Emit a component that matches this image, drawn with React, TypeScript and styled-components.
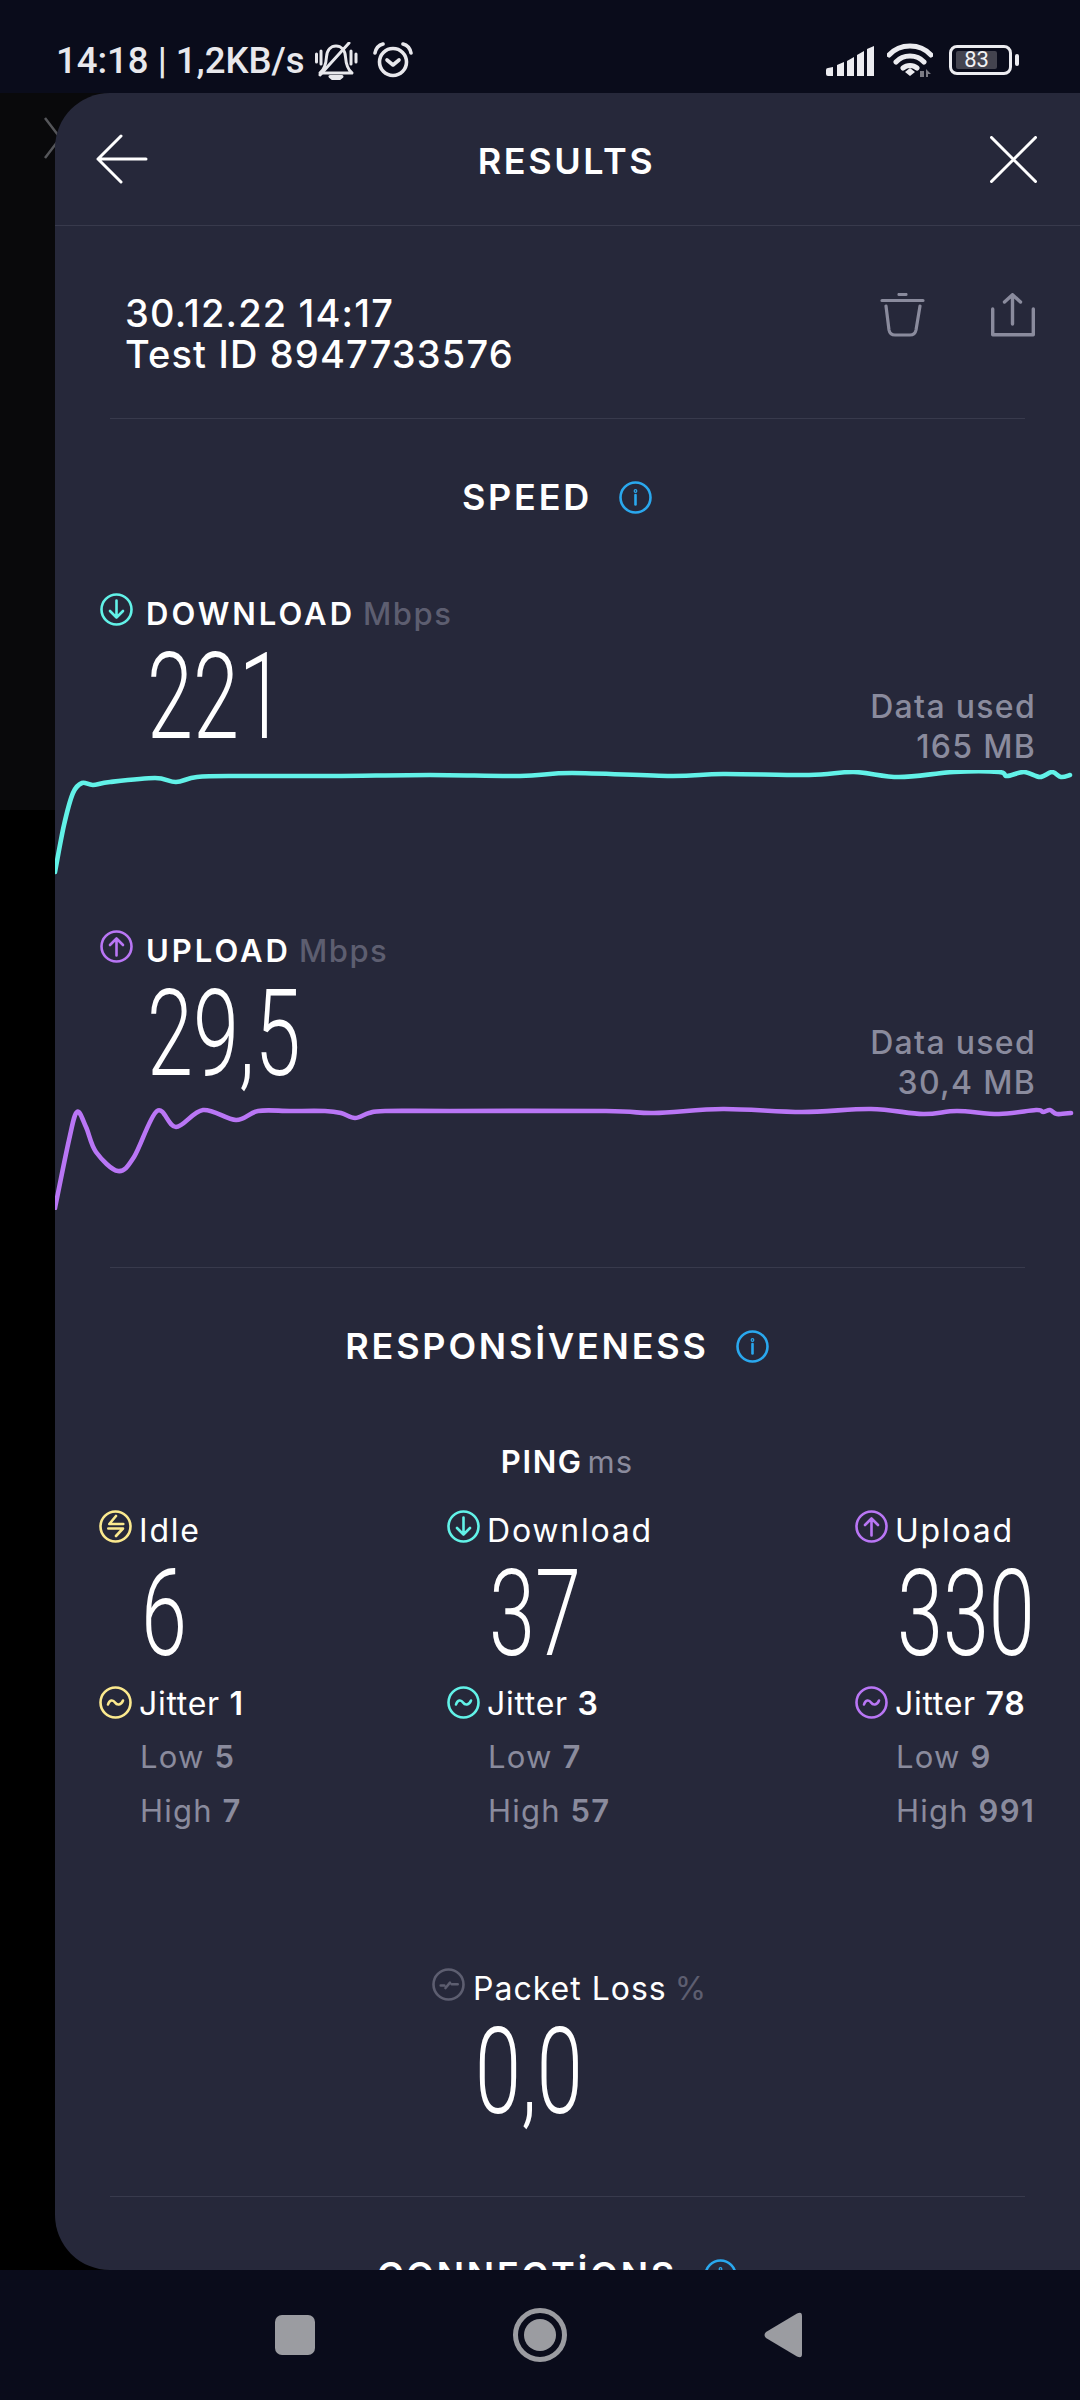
import React from "react";
import styled, { createGlobalStyle } from "styled-components";

const Global = createGlobalStyle`
  html, body { margin: 0; padding: 0; background: #0a0c1b; }
  * { box-sizing: border-box; }
`;

const TEXT = `Inter, "Liberation Sans", sans-serif`;
const GRAY = "#8a8b9d";
const DIM = "#5d5e70";
const CYAN = "#62f2e8";
const PURPLE = "#b976f5";
const YELLOW = "#fbe98e";
const BLUE = "#2aa8ee";

const Screen = styled.div`
  width: 1080px;
  height: 2400px;
  display: flex;
  flex-direction: column;
  overflow: hidden;
  background: #0a0c1b;
  font-family: ${TEXT};
  color: #fff;
`;

/* ---------- status bar ---------- */
const StatusBar = styled.div`
  flex: 0 0 93px;
  display: flex;
  align-items: flex-start;
  justify-content: space-between;
  padding: 42px 68px 0 56px;
  color: #e8e8ec;
`;
const StatusGroup = styled.div`
  display: flex;
  align-items: flex-start;
`;
const Clock = styled.span`
  font: 500 36.5px/38px Roboto, sans-serif;
  margin-right: 9px;
  white-space: nowrap;
`;
const AlarmIcon = styled.svg`
  margin-left: 15px;
`;
const SignalIcon = styled.svg`
  margin-top: 4px;
`;
const WifiIcon = styled.svg`
  margin-left: 13px;
`;
const Battery = styled.div`
  position: relative;
  width: 63px;
  height: 30px;
  margin: 3px 0 0 16px;
  border: 3px solid #ececf0;
  border-radius: 8px;
  padding: 3px 12px 3px 4px;
  &::after {
    content: "";
    position: absolute;
    right: -10px;
    top: 6px;
    width: 4px;
    height: 12px;
    border-radius: 2px;
    background: #ececf0;
  }
`;
const BatteryFill = styled.div`
  height: 100%;
  background: #44444f;
  border-radius: 2px;
  text-align: center;
  font: 400 22px/18px Roboto, sans-serif;
  color: #f2f2f4;
`;

/* ---------- main area ---------- */
const Middle = styled.div`
  position: relative;
  flex: 0 0 2177px;
  min-height: 0;
  padding-left: 55px;
  background: linear-gradient(#09090b 717px, #000 717px);
`;
const GhostClose = styled.svg`
  position: absolute;
  left: 44px;
  top: 24px;
`;
const Panel = styled.div`
  position: relative;
  height: 100%;
  overflow: hidden;
  background: #26283a;
  border-radius: 55px 0 0 55px;
`;
const Header = styled.header`
  height: 133px;
  display: grid;
  grid-template-columns: 1fr auto 1fr;
  align-items: center;
  padding: 0 43px 0 41px;
  border-bottom: 1px solid #383a4c;
`;
const HeaderTitle = styled.h1`
  margin: 3px 0 0;
  font: 600 36px/40px ${TEXT};
  letter-spacing: 2.6px;
`;
const CloseSlot = styled.div`
  justify-self: end;
  display: flex;
`;
const BackSlot = styled.div`
  display: flex;
`;
const Meta = styled.section`
  display: flex;
  justify-content: space-between;
  align-items: flex-start;
  padding: 67px 45px 43px 70px;
`;
const MetaText = styled.div`
  font: 500 38px/41px ${TEXT};
  letter-spacing: 1.15px;
`;
const MetaActions = styled.div`
  display: flex;
  gap: 66px;
`;
const Divider = styled.hr<{ $top?: number }>`
  margin: ${(p) => p.$top ?? 0}px 55px 0;
  border: 0;
  height: 1px;
  background: #383a4c;
`;
const SectionTitle = styled.h2<{ $top: number }>`
  margin: ${(p) => p.$top}px 0 0;
  padding-right: 21px;
  height: 40px;
  display: flex;
  justify-content: center;
  align-items: center;
  gap: 27px;
  font: 600 36px/40px ${TEXT};
  letter-spacing: 2.8px;
`;
const SpeedBlock = styled.section<{ $top: number }>`
  margin-top: ${(p) => p.$top}px;
`;
const Labelled = styled.div<{ $gap: number; $inset?: number; $top?: number }>`
  display: flex;
  align-items: flex-start;
  height: 33px;
  margin-top: ${(p) => p.$top ?? 0}px;
  gap: ${(p) => p.$gap}px;
  padding-left: ${(p) => p.$inset ?? 0}px;
`;
const SpeedLabel = styled.span`
  font: 600 31px/33px ${TEXT};
  margin-top: 4px;
  white-space: nowrap;
  letter-spacing: 3px;
`;
const PingLabel = styled.span`
  font: 400 32px/33px ${TEXT};
  margin-top: 4px;
  white-space: nowrap;
  letter-spacing: 1.8px;
`;
const JitterLabel = styled(PingLabel)`
  margin-top: 1px;
  letter-spacing: 0.7px;
`;
const PacketLabel = styled(PingLabel)`
  letter-spacing: 1px;
`;
const Unit = styled.span`
  color: ${DIM};
  font-weight: 500;
  margin-left: 8px;
  letter-spacing: 1.5px;
`;
const ValueRow = styled.div<{ $height: number; $pad: number }>`
  height: ${(p) => p.$height}px;
  display: flex;
  justify-content: space-between;
  align-items: flex-end;
  padding: 0 44px ${(p) => p.$pad}px 92px;
`;
const Value = styled.div`
  height: 138px;
  font: 300 120px/142px Roboto, sans-serif;
  transform: scaleX(0.69);
  transform-origin: left center;
  white-space: nowrap;
`;
const SpeedValue = styled(Value)`
  align-self: flex-start;
`;
const DataUsed = styled.div`
  text-align: right;
  font: 500 32px/40px ${TEXT};
  color: ${GRAY};
  letter-spacing: 1.3px;
`;
const Graph = styled.svg`
  display: block;
`;
const PingHeading = styled.div`
  margin-top: 81px;
  text-align: center;
  padding-right: 1px;
  font: 600 31px/30px ${TEXT};
  letter-spacing: 1.6px;
`;
const PingUnit = styled.span`
  color: ${GRAY};
  font-weight: 400;
  margin-left: 5px;
  letter-spacing: 1px;
`;
const PingGrid = styled.div`
  margin-top: 33px;
  display: grid;
  grid-template-columns: 348px 408px 1fr;
  padding-left: 44px;
`;
const PingValue = styled(Value)`
  margin-left: 42px;
`;
const Stats = styled.div`
  margin: 11px 0 0 41px;
  color: ${GRAY};
  font: 400 31px/54px ${TEXT};
  white-space: nowrap;
  letter-spacing: 1.2px;
`;
const Strong = styled.b`
  font-weight: 600;
`;
const PacketBlock = styled.section`
  margin: 130px 0 0 377px;
`;
const PacketValue = styled(Value)`
  margin: 0 0 57px 43px;
`;
const PacketUnit = styled.span`
  color: ${DIM};
  margin-left: 8px;
`;

/* ---------- nav bar ---------- */
const NavBar = styled.nav`
  flex: 1;
  display: flex;
  align-items: flex-start;
  padding: 38px 0 0 275px;
`;
const NavSquare = styled.div`
  width: 40px;
  height: 40px;
  margin-top: 7px;
  border-radius: 7px;
  background: #9b9ca1;
`;
const NavHome = styled.div`
  width: 54px;
  height: 54px;
  margin-left: 198px;
  border-radius: 50%;
  border: 5px solid #9b9ca1;
  padding: 6px;
  &::before {
    content: "";
    display: block;
    width: 32px;
    height: 32px;
    border-radius: 50%;
    background: #9b9ca1;
  }
`;
const NavBack = styled.svg`
  margin: 4px 0 0 197px;
`;

/* ---------- icons ---------- */
type Glyph = "down" | "up" | "wave" | "idle" | "loss";
const GLYPHS: Record<Glyph, React.ReactNode> = {
  down: <path d="M16.5 7.5V24.5M10 18L16.5 24.5L23 18" />,
  up: <path d="M16.5 25.5V8.5M10 15L16.5 8.5L23 15" />,
  wave: <path d="M9 18.5C10.5 13.5 14 13.5 16 16.5C18 19.5 22 19.5 24 14.5" />,
  idle: <path d="M17 6L10.3 14H24.3M9.3 18.5H24L17 26" />,
  loss: <path d="M8.7 17.5H12.3M19.7 16.3H25.7M13.5 20L18 14.7" />,
};
const Ring = ({ color, glyph }: { color: string; glyph: Glyph }) => (
  <svg width="33" height="33" viewBox="0 0 33 33" fill="none" stroke={color} strokeWidth="2.6" strokeLinecap="round" strokeLinejoin="round">
    <circle cx="16.5" cy="16.5" r="15" />
    {GLYPHS[glyph]}
  </svg>
);
const Info = () => (
  <svg width="33" height="33" viewBox="0 0 33 33" fill="none" stroke={BLUE} strokeWidth="2.6" strokeLinecap="round">
    <circle cx="16.5" cy="16.5" r="15" />
    <path d="M16.5 14V23.5" />
    <circle cx="16.5" cy="10" r="0.6" />
  </svg>
);

/* ---------- graph data ---------- */
type Pt = [number, number];
const curve = (pts: Pt[]) => {
  let d = `M${pts[0][0]} ${pts[0][1]}`;
  for (let i = 0; i < pts.length - 1; i++) {
    const p0 = pts[Math.max(i - 1, 0)];
    const p1 = pts[i];
    const p2 = pts[i + 1];
    const p3 = pts[Math.min(i + 2, pts.length - 1)];
    const c1 = [p1[0] + (p2[0] - p0[0]) / 6, p1[1] + (p2[1] - p0[1]) / 6];
    const c2 = [p2[0] - (p3[0] - p1[0]) / 6, p2[1] - (p3[1] - p1[1]) / 6];
    d += `C${c1[0]} ${c1[1]} ${c2[0]} ${c2[1]} ${p2[0]} ${p2[1]}`;
  }
  return d;
};
const shift = (pts: Pt[], oy: number): Pt[] => pts.map(([x, y]) => [x - 55, y - oy]);

const DOWNLOAD: Pt[] = [
  [55, 872], [64, 825], [73, 793], [82, 783], [93, 785], [110, 782], [155, 778], [176, 782], [197, 777],
  [240, 776], [333, 776], [430, 775], [520, 776], [572, 773], [671, 776], [723, 774], [809, 775], [854, 772],
  [899, 777], [954, 772], [999, 772], [1007, 776], [1024, 772], [1040, 777], [1052, 772], [1061, 777], [1070, 775],
];
const UPLOAD: Pt[] = [
  [55, 1208], [69, 1140], [77, 1112], [86, 1127], [96, 1152], [118, 1171], [134, 1157], [157, 1111], [176, 1127],
  [203, 1110], [236, 1120], [258, 1111], [290, 1111], [325, 1111], [341, 1113], [355, 1118], [369, 1113], [385, 1111], [450, 1111], [606, 1111], [654, 1113], [723, 1109],
  [802, 1112], [871, 1109], [923, 1114], [957, 1111], [999, 1114], [1036, 1110], [1043, 1112], [1050, 1110], [1057, 1114], [1071, 1113],
];

const Line = ({ pts, top, color }: { pts: Pt[]; top: number; color: string }) => (
  <Graph width="1025" height="105" viewBox="0 0 1025 105" fill="none">
    <path d={curve(shift(pts, top))} stroke={color} strokeWidth="4.6" strokeLinecap="round" strokeLinejoin="round" />
  </Graph>
);

const PING = [
  { label: "Idle", color: YELLOW, glyph: "idle" as Glyph, value: "6", jitter: "1", low: "5", high: "7" },
  { label: "Download", color: CYAN, glyph: "down" as Glyph, value: "37", jitter: "3", low: "7", high: "57" },
  { label: "Upload", color: PURPLE, glyph: "up" as Glyph, value: "330", jitter: "78", low: "9", high: "991" },
];

export default function App() {
  return (
    <Screen>
      <Global />
      <StatusBar>
        <StatusGroup>
          <Clock>14:18 | 1,2KB/s</Clock>
          <svg width="44" height="38" viewBox="0 0 44 38" fill="none" stroke="#e8e8ec" strokeWidth="3" strokeLinecap="round" strokeLinejoin="round">
            <path d="M2.5 12V20M7 9V22M37 9V22M42 12V20" />
            <path d="M6 31C11 27 12 22 12.5 15C13 8 17 4 22 4C27 4 31 8 31.5 15C32 22 33 27 38 31Z" />
            <path d="M6 33L35 1" />
            <path d="M16 34.5H28L25 37H19Z" fill="#e8e8ec" />
          </svg>
          <AlarmIcon width="40" height="36" viewBox="0 0 40 36" fill="none" stroke="#e8e8ec" strokeWidth="3.6" strokeLinecap="round" strokeLinejoin="round">
            <circle cx="20" cy="20" r="13.5" />
            <path d="M14 18L20 23L26 18" />
            <path d="M2 11C3 6 6 3 10 2M38 11C37 6 34 3 30 2" />
          </AlarmIcon>
        </StatusGroup>
        <StatusGroup>
          <SignalIcon width="48" height="30" viewBox="0 0 48 30" fill="#ececf0">
            <path d="M0 24Q0 22 2 22L7 21V30H2Q0 30 0 28Z" />
            <path d="M11 19L18 16V30H11Z" />
            <path d="M21 15L28 11V30H21Z" />
            <path d="M31 9L38 5V30H31Z" />
            <path d="M41 3L48 0V30H41Z" />
          </SignalIcon>
          <WifiIcon width="46" height="36" viewBox="0 0 46 36" fill="none">
            <path d="M2 13C13 1 33 1 44 13M9 20C16 12 30 12 37 20M16 26C20 22.5 26 22.5 30 26" stroke="#ececf0" strokeWidth="5" strokeLinecap="round" />
            <path d="M18 30L23 26L28 30L23 34Z" fill="#ececf0" />
            <path d="M33 29H37V35H33ZM39 35V27L44 32H41V35Z" fill="#7b7b84" />
          </WifiIcon>
          <Battery>
            <BatteryFill>83</BatteryFill>
          </Battery>
        </StatusGroup>
      </StatusBar>

      <Middle>
        <GhostClose width="14" height="42" viewBox="0 0 14 42" fill="none" stroke="#55565a" strokeWidth="2.5">
          <path d="M1 1L14 18M1 41L14 24" />
        </GhostClose>
        <Panel>
          <Header>
            <BackSlot>
              <svg width="52" height="50" viewBox="0 0 52 50" fill="none" stroke="#fff" strokeWidth="3" strokeLinecap="round" strokeLinejoin="round">
                <path d="M50 25H2M25 2L2 25L25 48" />
              </svg>
            </BackSlot>
            <HeaderTitle>RESULTS</HeaderTitle>
            <CloseSlot>
              <svg width="47" height="47" viewBox="0 0 47 47" fill="none" stroke="#fff" strokeWidth="3" strokeLinecap="round">
                <path d="M1.5 1.5L45.5 45.5M45.5 1.5L1.5 45.5" />
              </svg>
            </CloseSlot>
          </Header>

          <Meta>
            <MetaText>
              30.12.22 14:17
              <br />
              Test ID 8947733576
            </MetaText>
            <MetaActions>
              <svg width="45" height="44" viewBox="0 0 45 44" fill="none" stroke={GRAY} strokeWidth="3.2" strokeLinecap="round" strokeLinejoin="round">
                <path d="M19 1.5H26M2 7.5H43M6 13L9 37Q10 42 15 42H30Q35 42 36 37L40 13" />
              </svg>
              <svg width="44" height="44" viewBox="0 0 44 44" fill="none" stroke={GRAY} strokeWidth="3.4" strokeLinecap="round" strokeLinejoin="round">
                <path d="M1.7 16V41.8H42.3V16M21.5 31V2M13.5 9L21.5 1.7L29.5 9" />
              </svg>
            </MetaActions>
          </Meta>
          <Divider />

          <SectionTitle $top={58}>
            SPEED
            <Info />
          </SectionTitle>

          <SpeedBlock $top={76}>
            <Labelled $gap={13} $inset={45}>
              <Ring color={CYAN} glyph="down" />
              <SpeedLabel>
                DOWNLOAD<Unit>Mbps</Unit>
              </SpeedLabel>
            </Labelled>
            <ValueRow $height={144} $pad={3}>
              <SpeedValue>221</SpeedValue>
              <DataUsed>
                Data used
                <br />
                165 MB
              </DataUsed>
            </ValueRow>
            <Line pts={DOWNLOAD} top={770} color={CYAN} />
          </SpeedBlock>

          <SpeedBlock $top={55}>
            <Labelled $gap={13} $inset={45}>
              <Ring color={PURPLE} glyph="up" />
              <SpeedLabel>
                UPLOAD<Unit>Mbps</Unit>
              </SpeedLabel>
            </Labelled>
            <ValueRow $height={142} $pad={2}>
              <SpeedValue>29,5</SpeedValue>
              <DataUsed>
                Data used
                <br />
                30,4 MB
              </DataUsed>
            </ValueRow>
            <Line pts={UPLOAD} top={1105} color={PURPLE} />
          </SpeedBlock>

          <Divider $top={57} />

          <SectionTitle $top={58}>
            RESPONSİVENESS
            <Info />
          </SectionTitle>

          <PingHeading>
            PING<PingUnit>ms</PingUnit>
          </PingHeading>

          <PingGrid>
            {PING.map((p) => (
              <div key={p.label}>
                <Labelled $gap={7}>
                  <Ring color={p.color} glyph={p.glyph} />
                  <PingLabel>{p.label}</PingLabel>
                </Labelled>
                <PingValue>{p.value}</PingValue>
                <Labelled $gap={7} $top={5}>
                  <Ring color={p.color} glyph="wave" />
                  <JitterLabel>
                    Jitter <Strong>{p.jitter}</Strong>
                  </JitterLabel>
                </Labelled>
                <Stats>
                  Low <Strong>{p.low}</Strong>
                  <br />
                  High <Strong>{p.high}</Strong>
                </Stats>
              </div>
            ))}
          </PingGrid>

          <PacketBlock>
            <Labelled $gap={8}>
              <Ring color={DIM} glyph="loss" />
              <PacketLabel>
                Packet Loss<PacketUnit>%</PacketUnit>
              </PacketLabel>
            </Labelled>
            <PacketValue>0,0</PacketValue>
          </PacketBlock>
          <Divider />

          <SectionTitle $top={58}>
            CONNECTİONS
            <Info />
          </SectionTitle>
        </Panel>
      </Middle>

      <NavBar>
        <NavSquare />
        <NavHome />
        <NavBack width="38" height="46" viewBox="0 0 38 46" fill="#9b9ca1">
          <path d="M33 1.5Q38 -1 38 4V42Q38 47 33 44.5L2 26Q-1 23 2 20Z" />
        </NavBack>
      </NavBar>
    </Screen>
  );
}
